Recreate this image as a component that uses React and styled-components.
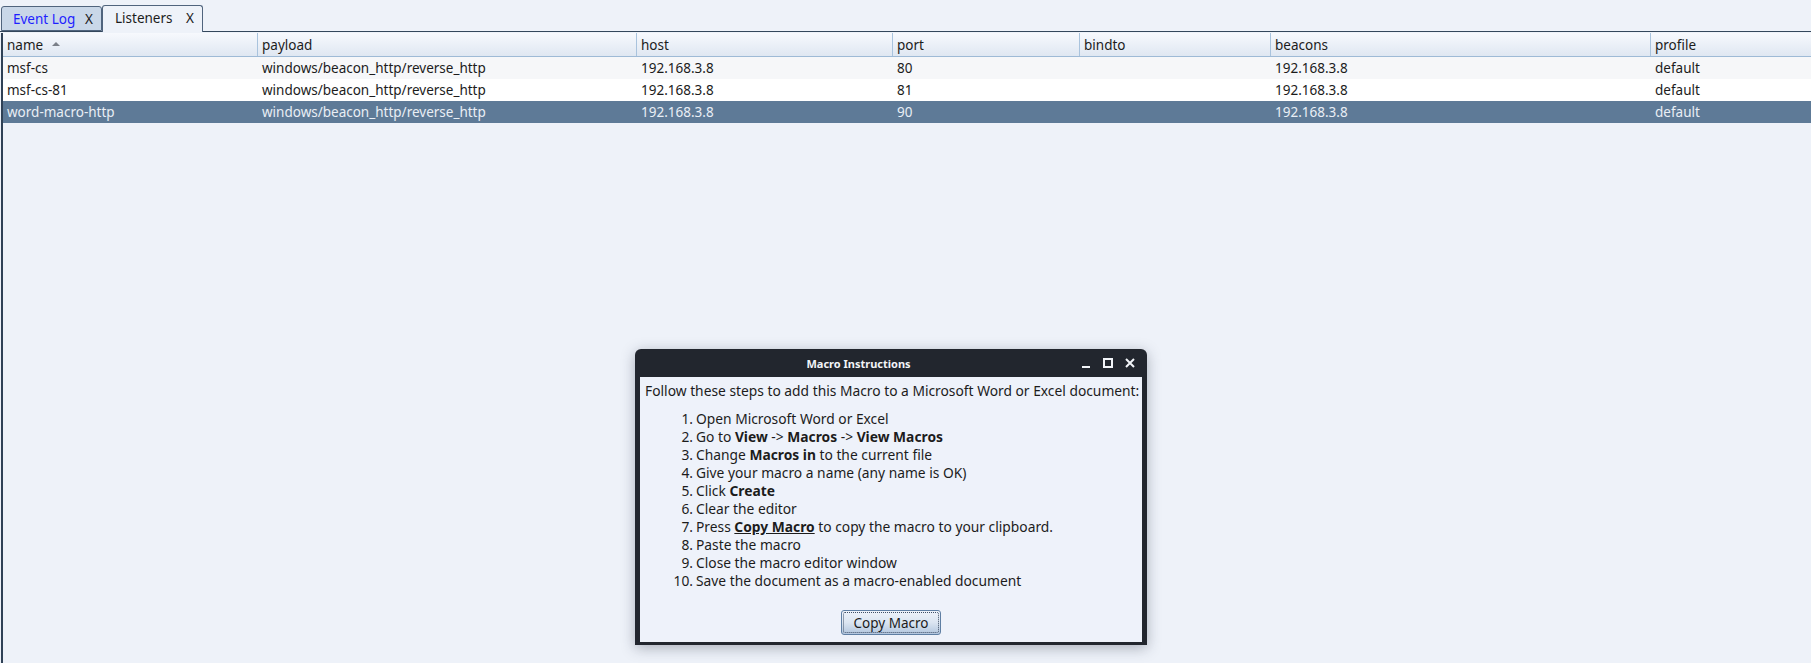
import React from "react";
import styled, { createGlobalStyle } from "styled-components";

const GlobalStyle = createGlobalStyle`
  html, body {
    margin: 0;
    padding: 0;
    background: #eef2f9;
  }
  body {
    font-family: "Noto Sans", "DejaVu Sans", sans-serif;
    font-size: 13.5px;
    color: #1c1c1c;
  }
`;

const Screen = styled.div`
  position: relative;
  width: 1811px;
  height: 663px;
  overflow: hidden;
  background: #eef2f9;
  display: flex;
  flex-direction: column;
`;

const TabBar = styled.div`
  height: 31px;
  display: flex;
  align-items: flex-end;
  padding-left: 1px;
  flex-shrink: 0;
`;

const Tab = styled.div`
  box-sizing: border-box;
  display: flex;
  align-items: center;
  height: ${(p) => (p.active ? "27px" : "25px")};
  width: 101px;
  padding-left: ${(p) => (p.active ? "12px" : "11px")};
  background: ${(p) => (p.active ? "#eef2f9" : "#c9d7e8")};
  border: 1px solid #50647d;
  border-bottom: ${(p) => (p.active ? "none" : "1px solid #50647d")};
  border-radius: 3px 3px 0 0;
  margin-bottom: ${(p) => (p.active ? "-1px" : "0")};
  position: relative;
  z-index: ${(p) => (p.active ? 2 : 1)};
  color: ${(p) => (p.alert ? "#1f1fff" : "#1c1c1c")};
  padding-bottom: ${(p) => (p.active ? "2px" : "0")};
`;

const TabClose = styled.span`
  color: #1c1c1c;
  margin-left: auto;
  margin-right: 8px;
`;

const Panel = styled.div`
  flex: 1;
  border-top: 1px solid #34475c;
  padding-top: 1px;
  display: flex;
`;

const TableWrap = styled.div`
  flex: 1;
  margin-left: 1px;
  border-left: 2px solid #2f4156;
  display: flex;
  flex-direction: column;
`;

const cols = "254px 379px 256px 187px 191px 380px 1fr";

const HeaderRow = styled.div`
  display: grid;
  grid-template-columns: ${cols};
  height: 23px;
  background: linear-gradient(#f7f9fd, #dfe7f2);
  border-bottom: 1px solid #9ebad6;
`;

const HeaderCell = styled.div`
  display: flex;
  align-items: center;
  padding-left: 4px;
  border-left: ${(p) => (p.first ? "none" : "1px solid #a9c3dd")};
  gap: 9px;
`;

const SortArrow = styled.span`
  width: 0;
  height: 0;
  border-left: 4px solid transparent;
  border-right: 4px solid transparent;
  border-bottom: 4px solid #7a7f88;
  margin-top: -2px;
`;

const Row = styled.div`
  display: grid;
  grid-template-columns: ${cols};
  height: 22px;
  background: ${(p) => (p.selected ? "#5e7a97" : p.odd ? "#f6f7f9" : "#ffffff")};
  color: ${(p) => (p.selected ? "#e9eef5" : "#1c1c1c")};
`;

const Cell = styled.div`
  display: flex;
  align-items: center;
  padding-left: ${(p) => (p.first ? "4px" : "5px")};
  white-space: nowrap;
`;

const Dialog = styled.div`
  position: absolute;
  left: 635px;
  top: 349px;
  width: 512px;
  height: 296px;
  box-sizing: border-box;
  background: #22262e;
  border-radius: 6px 6px 0 0;
  padding: 0 5px 3px 5px;
  box-shadow: 0 3px 14px rgba(40, 50, 70, 0.35);
  display: flex;
  flex-direction: column;
`;

const TitleBar = styled.div`
  height: 28px;
  display: flex;
  align-items: center;
  flex-shrink: 0;
`;

const Title = styled.div`
  flex: 1;
  text-align: center;
  color: #f2f4f8;
  font-weight: bold;
  font-size: 11px;
  padding-top: 1px;
`;

const Controls = styled.div`
  display: flex;
  align-items: center;
  gap: 12px;
  padding-right: 7px;
  padding-left: 4px;
`;

const Body = styled.div`
  flex: 1;
  background: #eef2fa;
  padding: 5px 5px 7px 5px;
  display: flex;
  flex-direction: column;
  line-height: 18px;
  font-size: 13.8px;
  white-space: nowrap;
`;

const Intro = styled.div``;

const Steps = styled.ol`
  list-style: none;
  margin: 10px 0 0 0;
  padding: 0 0 0 20px;
`;

const Step = styled.li`
  display: grid;
  grid-template-columns: 28px 1fr;
  column-gap: 3px;
  height: 18px;
`;

const Num = styled.span`
  text-align: right;
`;

const Strong = styled.b`
  font-weight: bold;
  text-decoration: ${(p) => (p.underline ? "underline" : "none")};
`;

const ButtonRow = styled.div`
  margin-top: auto;
  display: flex;
  justify-content: center;
`;

const Button = styled.button`
  box-sizing: border-box;
  width: 100px;
  height: 25px;
  font-family: "Noto Sans", "DejaVu Sans", sans-serif;
  font-size: 13.5px;
  color: #1c1c1c;
  border: 1px solid #5f7fa3;
  border-radius: 3px;
  background: linear-gradient(#eef3fa 0%, #dbe5f1 50%, #b2c6de 100%);
  padding: 0;
  position: relative;
  &::after {
    content: "";
    position: absolute;
    inset: 1px;
    border: 1px dotted #3f4f66;
    border-radius: 2px;
  }
`;

const columns = ["name", "payload", "host", "port", "bindto", "beacons", "profile"];

const listeners = [
  ["msf-cs", "windows/beacon_http/reverse_http", "192.168.3.8", "80", "", "192.168.3.8", "default"],
  ["msf-cs-81", "windows/beacon_http/reverse_http", "192.168.3.8", "81", "", "192.168.3.8", "default"],
  ["word-macro-http", "windows/beacon_http/reverse_http", "192.168.3.8", "90", "", "192.168.3.8", "default"],
];

const steps = [
  <>Open Microsoft Word or Excel</>,
  <>Go to <Strong>View</Strong> -&gt; <Strong>Macros</Strong> -&gt; <Strong>View Macros</Strong></>,
  <>Change <Strong>Macros in</Strong> to the current file</>,
  <>Give your macro a name (any name is OK)</>,
  <>Click <Strong>Create</Strong></>,
  <>Clear the editor</>,
  <>Press <Strong underline>Copy Macro</Strong> to copy the macro to your clipboard.</>,
  <>Paste the macro</>,
  <>Close the macro editor window</>,
  <>Save the document as a macro-enabled document</>,
];

const WinControls = () => (
  <Controls>
    <svg width="10" height="10" viewBox="0 0 10 10">
      <rect x="1" y="8" width="8" height="2" fill="#f2f4f8" />
    </svg>
    <svg width="10" height="10" viewBox="0 0 10 10">
      <rect x="1" y="1" width="8" height="8" fill="none" stroke="#f2f4f8" strokeWidth="2" />
    </svg>
    <svg width="10" height="10" viewBox="0 0 10 10">
      <path d="M1 1 L9 9 M9 1 L1 9" stroke="#f2f4f8" strokeWidth="2" />
    </svg>
  </Controls>
);

export default function App() {
  return (
    <Screen>
      <GlobalStyle />
      <TabBar>
        <Tab alert>
          Event Log
          <TabClose>X</TabClose>
        </Tab>
        <Tab active>
          Listeners
          <TabClose>X</TabClose>
        </Tab>
      </TabBar>
      <Panel>
        <TableWrap>
          <HeaderRow>
            {columns.map((c, i) => (
              <HeaderCell key={c} first={i === 0}>
                {c}
                {i === 0 && <SortArrow />}
              </HeaderCell>
            ))}
          </HeaderRow>
          {listeners.map((row, r) => (
            <Row key={row[0]} odd={r % 2 === 0} selected={r === 2}>
              {row.map((v, i) => (
                <Cell key={i} first={i === 0}>
                  {v}
                </Cell>
              ))}
            </Row>
          ))}
        </TableWrap>
      </Panel>

      <Dialog>
        <TitleBar>
          <Title>Macro Instructions</Title>
          <WinControls />
        </TitleBar>
        <Body>
          <Intro>Follow these steps to add this Macro to a Microsoft Word or Excel document:</Intro>
          <Steps>
            {steps.map((s, i) => (
              <Step key={i}>
                <Num>{i + 1}.</Num>
                <span>{s}</span>
              </Step>
            ))}
          </Steps>
          <ButtonRow>
            <Button>Copy Macro</Button>
          </ButtonRow>
        </Body>
      </Dialog>
    </Screen>
  );
}
